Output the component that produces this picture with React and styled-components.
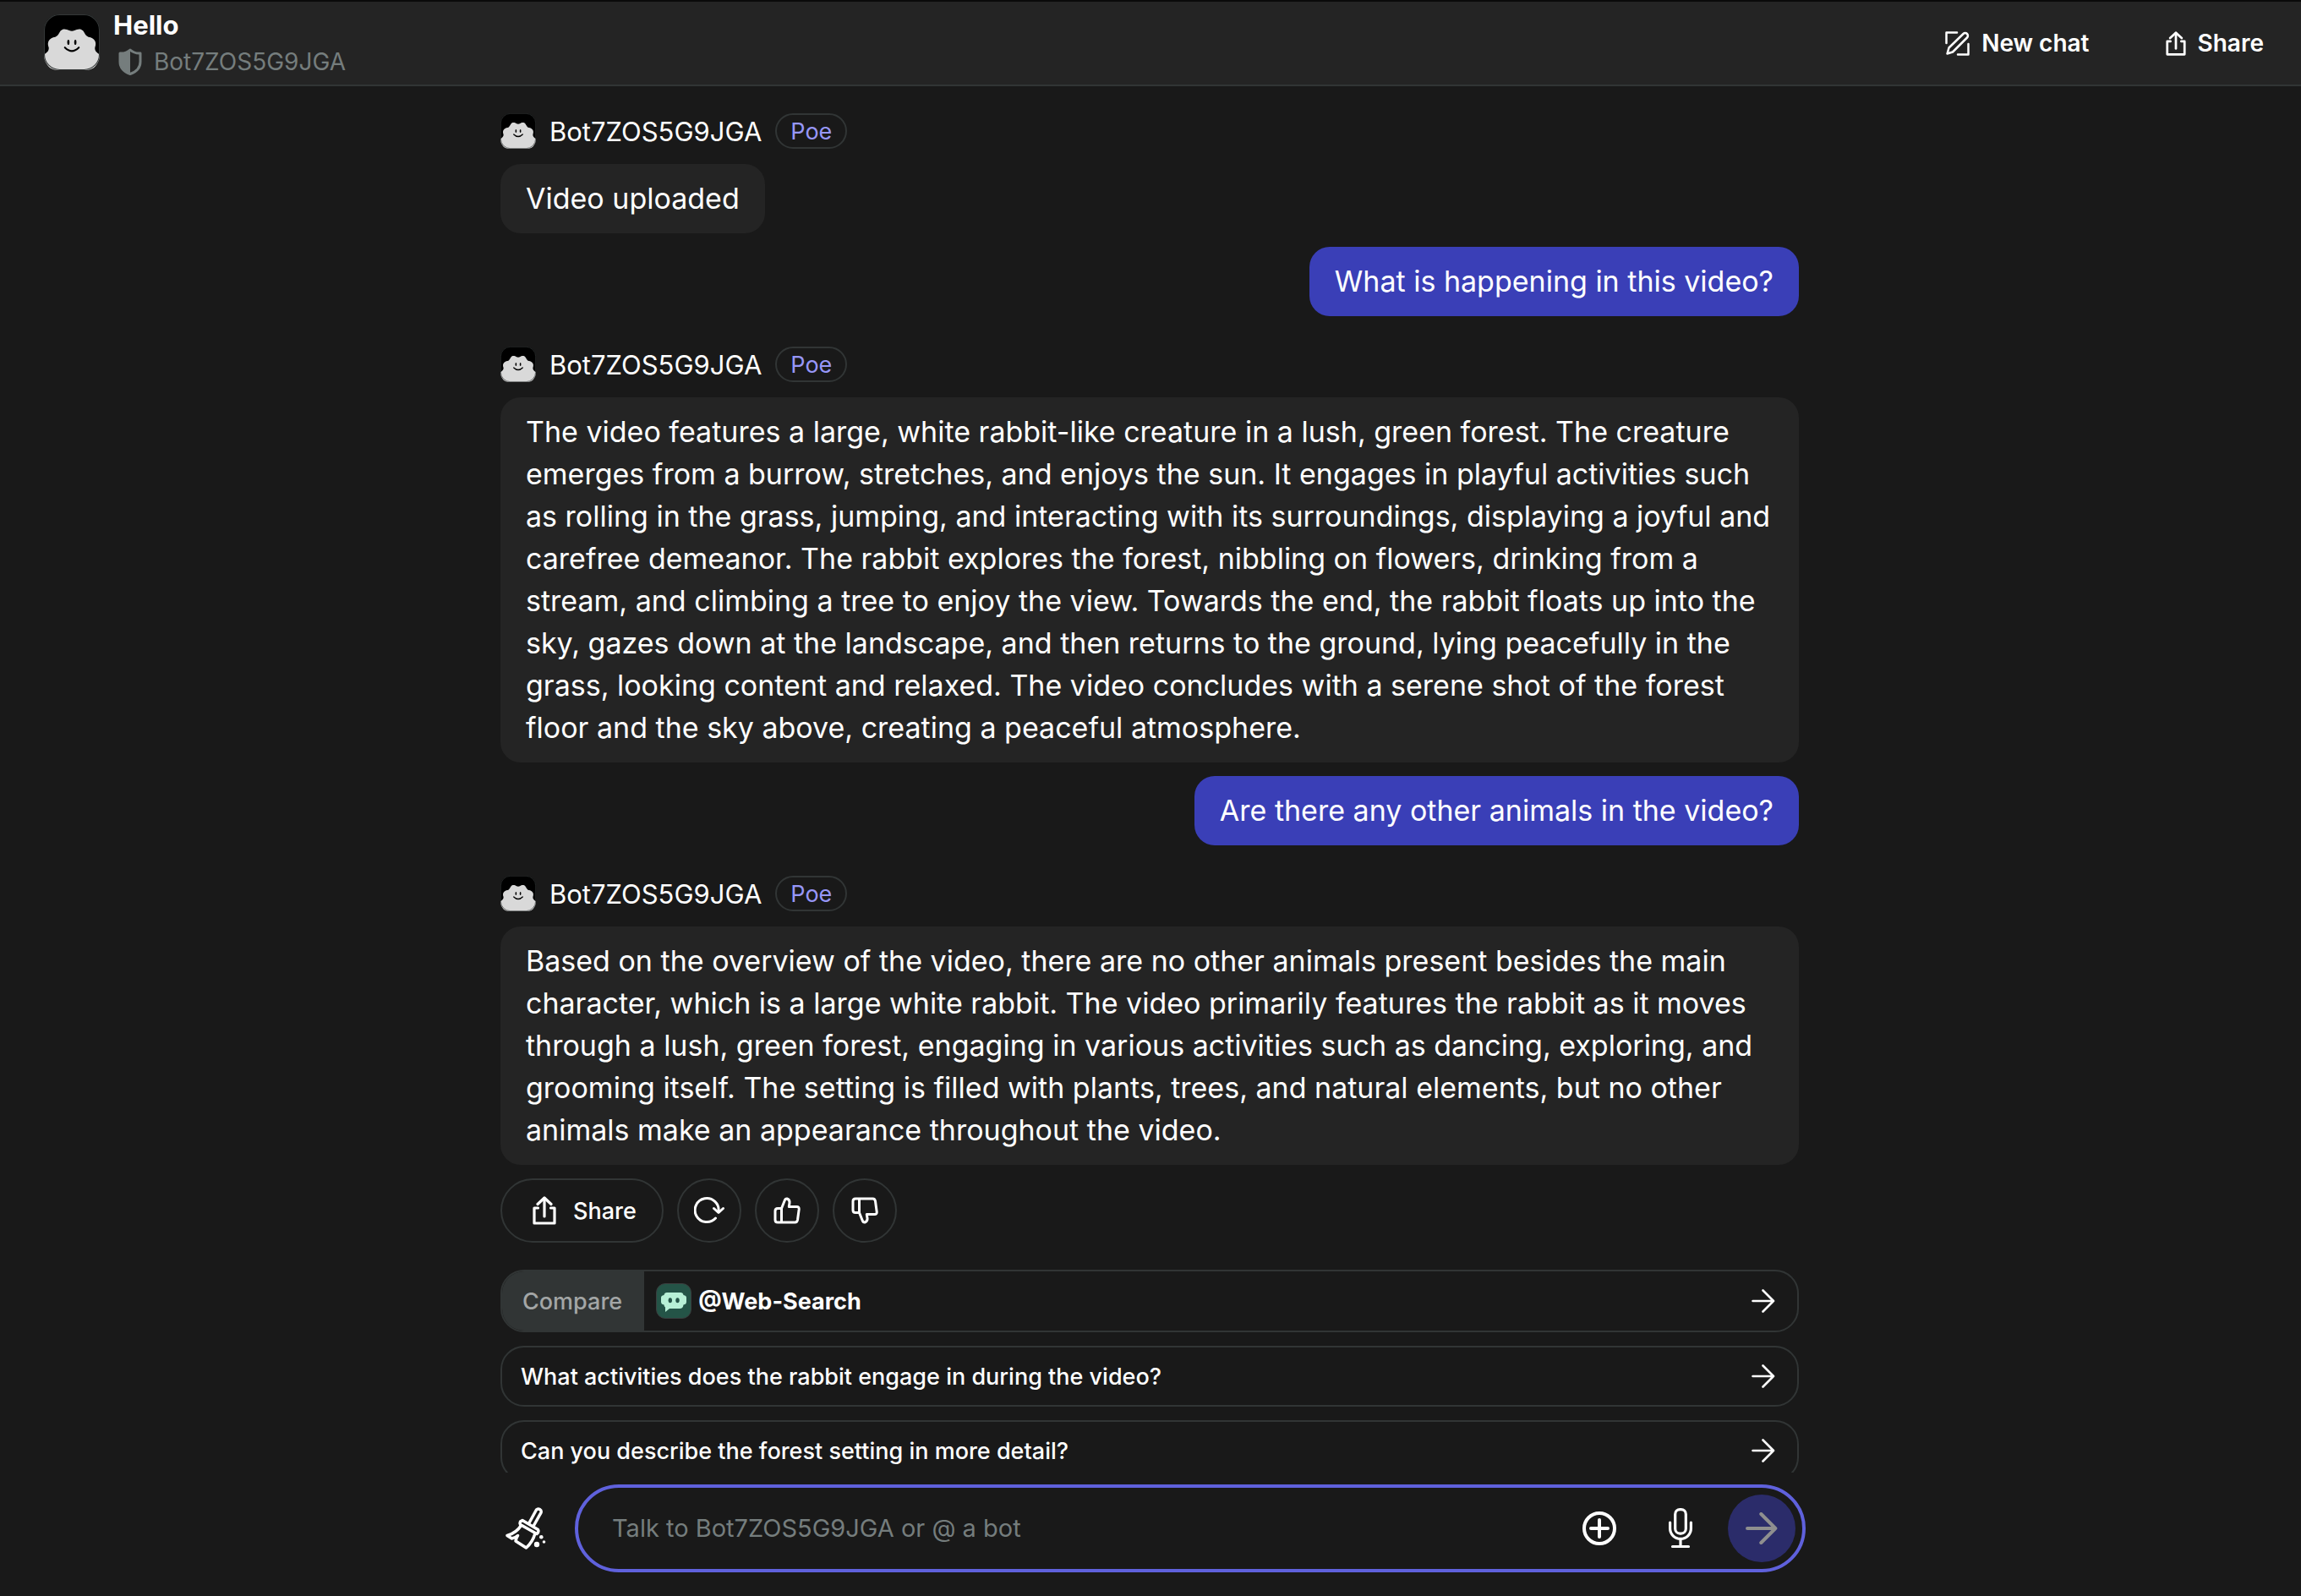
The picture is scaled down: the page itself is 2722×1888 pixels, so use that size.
import React from "react";
import styled, { createGlobalStyle } from "styled-components";

const GlobalStyle = createGlobalStyle`
  * { box-sizing: border-box; }
  body {
    margin: 0;
    background: #191919;
    color: #ffffff;
    font-family: Inter, "Liberation Sans", sans-serif;
    -webkit-font-smoothing: antialiased;
  }
  button, input { font: inherit; color: inherit; }
  p, h1, h2 { margin: 0; font: inherit; }
  svg { display: block; flex: none; }
`;

const line = "#313535";

const Page = styled.div`
  display: flex;
  flex-direction: column;
  height: 100vh;
`;

const TopBar = styled.header`
  display: flex;
  justify-content: space-between;
  align-items: center;
  padding: 0 44px 2px 52px;
  height: 102px;
  flex: none;
  background: #242424;
  border-top: 2px solid #0a0a0a;
  border-bottom: 2px solid ${line};
`;

const ChatInfo = styled.div`
  display: flex;
  align-items: center;
  gap: 16px;
`;

const ChatHeading = styled.div`
  padding-top: 8px;
`;

const ChatTitle = styled.h1`
  font-size: 31px;
  line-height: 38px;
  font-weight: 700;
`;

const ChatBot = styled.p`
  display: flex;
  align-items: center;
  gap: 14px;
  padding-left: 6px;
  font-size: 28px;
  line-height: 48px;
  color: #757d7d;
`;

const TopActions = styled.nav`
  display: flex;
  gap: 90px;
  padding-top: 2px;
`;

const TopButton = styled.button`
  display: flex;
  align-items: center;
  gap: 14px;
  padding: 0;
  border: 0;
  background: none;
  font-size: 28px;
  line-height: 40px;
  font-weight: 600;
`;

const Scroller = styled.main`
  flex: 1;
  min-height: 0;
  overflow: hidden;
  padding: 32px 2px 0 0;
`;

const Column = styled.div`
  display: flex;
  flex-direction: column;
  width: 100%;
  max-width: 1536px;
  margin: 0 auto;
`;

const BotMessage = styled.article`
  display: flex;
  flex-direction: column;
  align-items: flex-start;
  gap: 18px;
`;

const Sender = styled.div`
  display: flex;
  align-items: center;
  gap: 16px;
  height: 42px;
  font-size: 31px;
`;

const Tag = styled.span`
  display: flex;
  align-items: center;
  height: 42px;
  padding: 0 16px;
  border: 2px solid ${line};
  border-radius: 21px;
  font-size: 27px;
  color: #9797f8;
`;

const Bubble = styled.p`
  padding: 16px 30px;
  border-radius: 24px;
  font-size: 34px;
  line-height: 50px;
  background: ${(p) => (p.$own ? "#3a3fb7" : "#242424")};
  align-self: ${(p) => (p.$own ? "flex-end" : "auto")};
  margin: ${(p) => (p.$own ? "16px 0 36px" : "0")};
`;

const Actions = styled.div`
  display: flex;
  gap: 16px;
  margin-top: 16px;
`;

const ActionButton = styled.button`
  display: flex;
  align-items: center;
  justify-content: center;
  gap: 20px;
  min-width: 76px;
  height: 76px;
  padding: ${(p) => (p.$wide ? "0 30px 0 36px" : "0")};
  border: 2px solid ${line};
  border-radius: 38px;
  background: none;
  font-size: 27px;
  font-weight: 500;
`;

const Suggestions = styled.div`
  display: flex;
  flex-direction: column;
  gap: 16px;
  margin-top: 32px;
`;

const Suggestion = styled.button`
  display: flex;
  align-items: stretch;
  height: ${(p) => (p.$tall ? 74 : 72)}px;
  flex: none;
  padding: 0 26px 0 0;
  border: 2px solid ${line};
  border-radius: 28px;
  background: none;
  overflow: hidden;
  font-size: 27px;
  font-weight: 500;
  text-align: left;
`;

const SuggestionText = styled.span`
  display: flex;
  align-items: center;
  flex: 1;
  padding-left: 22px;
`;

const CompareLabel = styled.span`
  display: flex;
  align-items: center;
  padding: 0 26px 0 24px;
  background: ${line};
  color: #a3a6a6;
`;

const CompareBot = styled.span`
  display: flex;
  align-items: center;
  gap: 8px;
  flex: 1;
  padding-left: 14px;
  font-weight: 700;
`;

const ArrowSlot = styled.span`
  display: flex;
  align-items: center;
`;

const Footer = styled.footer`
  flex: none;
  padding: 14px 2px 28px 0;
`;

const Composer = styled.form`
  display: flex;
  align-items: center;
  gap: 34px;
  width: 100%;
  max-width: 1552px;
  margin: 0 auto;
  padding-left: 14px;
`;

const IconButton = styled.button`
  display: flex;
  align-items: center;
  justify-content: center;
  flex: none;
  width: ${(p) => p.$size}px;
  height: ${(p) => p.$size}px;
  padding: 0;
  border: 0;
  border-radius: 50%;
  background: ${(p) => (p.$filled ? "#2b2c6a" : "none")};
  color: ${(p) => (p.$filled ? "#8f8f8f" : "#ffffff")};
`;

const InputShell = styled.div`
  display: flex;
  align-items: center;
  gap: 16px;
  flex: 1;
  height: 104px;
  padding: 0 8px 0 40px;
  border: 4px solid #5f61dc;
  border-radius: 52px;
`;

const TextField = styled.input`
  flex: 1;
  min-width: 0;
  padding: 0;
  border: 0;
  outline: 0;
  background: none;
  font-size: 29px;
  line-height: 40px;
  &::placeholder { color: #757d7d; opacity: 1; }
`;

const stroke = {
  fill: "none",
  stroke: "currentColor",
  strokeLinecap: "round",
  strokeLinejoin: "round",
};

const Avatar = ({ size }) => (
  <svg width={size} height={size} viewBox="0 0 64 64" aria-hidden="true">
    <rect width="64" height="64" rx="18" fill="#000" />
    <path
      d="M0 46 C3 44 6 42 5.500 38 C3 32 6 27 13 26 C16 25 17 22 19 19 C22 15.500 26 17 29 18.500 Q32 20 35 18.500 C38 17 42 15.500 45 19 C47 22 48 25 51 26 C58 27 61 32 58.500 38 C58 42 61 44 64 46 C64 52 62 55 60.500 57.500 C58 62 53 64 48 64 H16 C11 64 6 62 3.500 57.500 C2 55 0 52 0 46 Z"
      fill="#d9d9d9"
    />
    <rect x="0.500" y="0.500" width="63" height="63" rx="17.500" fill="none" stroke="#343838" />
    <ellipse cx="28" cy="32" rx="1.300" ry="3" fill="#000" />
    <ellipse cx="36" cy="32" rx="1.300" ry="3" fill="#000" />
    <path d="M24 38 Q32 46 40 38" fill="none" stroke="#000" strokeWidth="2" strokeLinecap="round" />
  </svg>
);

const ShieldIcon = () => (
  <svg width="28" height="32" viewBox="0 0 28 32" aria-hidden="true">
    <path
      d="M14 2 Q19 6.500 26 6 V16 C26 23 21 28 14 30.500 C7 28 2 23 2 16 V6 Q9 6.500 14 2 Z"
      {...stroke}
      strokeWidth="3"
    />
    <path d="M14 2 V30.500 C7 28 2 23 2 16 V6 Q9 6.500 14 2 Z" fill="currentColor" />
  </svg>
);

const ComposeIcon = () => (
  <svg width="29" height="29" viewBox="0 0 29 29" aria-hidden="true">
    <g {...stroke} strokeWidth="2.500">
      <path d="M14 1.500 H1.500 V14" />
      <path d="M27.500 15 V27.500 H15" />
      <path d="M2.500 26.500 L4.500 19.500 L21.500 3 A3 3 0 0 1 26 7.500 L9 24.500 Z" />
    </g>
  </svg>
);

const ShareIcon = ({ width, height }) => (
  <svg width={width} height={height} viewBox="0 0 28 34" aria-hidden="true">
    <g {...stroke} strokeWidth="3.200">
      <path d="M14 2.500 V24" />
      <path d="M6 9.500 L14 2 L22 9.500" />
      <path d="M6.500 14 H2 V32 H26 V14 H21.500" />
    </g>
  </svg>
);

const RetryIcon = () => (
  <svg width="36" height="32" viewBox="0 0 36 32" aria-hidden="true">
    <g {...stroke} strokeWidth="3">
      <path d="M25.500 25 A14 14 0 1 1 29 17.500" />
      <path d="M23.500 13.500 L29 18.500 L34.500 13.500" />
    </g>
  </svg>
);

const ThumbIcon = ({ down }) => (
  <svg width="32" height="32" viewBox="0 0 32 32" aria-hidden="true">
    <path
      transform={down ? "matrix(1 0 0 -1 0 32)" : undefined}
      d="M9.500 13.500 L13.500 3.500 Q14.300 1.800 16 2 C18.500 3 19.300 5 19 7 L18.300 11.500 H27.500 Q30.500 11.500 30.200 14.500 L28.500 27 Q28 30 25.500 30 H5 Q2 30 2 27 V16.500 Q2 13.500 5 13.500 H9.500 V30"
      {...stroke}
      strokeWidth="3"
    />
  </svg>
);

const ArrowIcon = ({ size, weight }) => (
  <svg width={size} height={size} viewBox="0 0 28 28" aria-hidden="true">
    <path d="M1.500 14 H26 M13.500 1.500 L26 14 L13.500 26.500" {...stroke} strokeWidth={weight} />
  </svg>
);

const WebSearchIcon = () => (
  <svg width="42" height="42" viewBox="0 0 42 42" aria-hidden="true">
    <rect x="0.500" y="0.500" width="41" height="41" rx="10.500" fill="#245447" stroke="#3a3f3f" />
    <path
      d="M13 11 H29 Q32 11 32.500 14 Q36 14.500 36 17 V22 Q36 25 32.500 25.500 Q32 30 28 30 H16 L11 34 V28.500 Q9.500 27.500 9.500 25.500 Q6 25 6 22 V17 Q6 14.500 9.500 14 Q10 11 13 11 Z"
      fill="#b7f0d6"
    />
    <ellipse cx="16.800" cy="20.300" rx="2.200" ry="3" fill="#245447" />
    <ellipse cx="25.500" cy="20.300" rx="2.200" ry="3" fill="#245447" />
  </svg>
);

const BroomIcon = () => (
  <svg width="48" height="52" viewBox="0 0 48 52" aria-hidden="true">
    <g {...stroke} strokeWidth="3.500">
      <path d="M28 19.500 L36.500 4 A3.300 3.300 0 0 1 42 7.300 L33.500 22.500" />
      <path d="M20 16.500 L38.500 27.500 Q39.500 29 38.500 31 L37 32.500 L17.500 21.500 Q16.500 20 17.500 18 Z" />
      <path d="M18.500 22.500 C15 28 9 32.500 2 34.500 L7.500 38 Q11 37.500 14.500 34.500 Q12.500 37.500 12 41 L24.500 49 C29 45 33 39 35 32" />
    </g>
    <circle cx="37" cy="45" r="3.200" fill="currentColor" />
    <circle cx="42.300" cy="36.200" r="2.300" fill="currentColor" />
    <circle cx="45.500" cy="42" r="1.800" fill="currentColor" />
  </svg>
);

const PlusIcon = () => (
  <svg width="40" height="40" viewBox="0 0 40 40" aria-hidden="true">
    <g {...stroke} strokeWidth="4">
      <circle cx="20" cy="20" r="18" />
      <path d="M20 10 V30 M10 20 H30" />
    </g>
  </svg>
);

const MicIcon = () => (
  <svg width="28" height="48" viewBox="0 0 28 48" aria-hidden="true">
    <g {...stroke} strokeWidth="3.200">
      <rect x="7.700" y="1.600" width="12.600" height="28.500" rx="5.600" />
      <path d="M1.600 17 V24 A12.400 12.400 0 0 0 26.400 24 V17" />
      <path d="M14 37 V45.500 M4.500 45.500 H23.500" />
    </g>
  </svg>
);

const BotReply = ({ children }) => (
  <BotMessage>
    <Sender>
      <Avatar size={42} />
      <h2>Bot7ZOS5G9JGA</h2>
      <Tag>Poe</Tag>
    </Sender>
    <Bubble>{children}</Bubble>
  </BotMessage>
);

const questions = [
  "What activities does the rabbit engage in during the video?",
  "Can you describe the forest setting in more detail?",
];

export default function App() {
  return (
    <Page>
      <GlobalStyle />
      <TopBar>
        <ChatInfo>
          <Avatar size={66} />
          <ChatHeading>
            <ChatTitle>Hello</ChatTitle>
            <ChatBot>
              <ShieldIcon />
              Bot7ZOS5G9JGA
            </ChatBot>
          </ChatHeading>
        </ChatInfo>
        <TopActions>
          <TopButton type="button">
            <ComposeIcon />
            New chat
          </TopButton>
          <TopButton type="button">
            <ShareIcon width={24} height={29} />
            Share
          </TopButton>
        </TopActions>
      </TopBar>

      <Scroller>
        <Column>
          <BotReply>Video uploaded</BotReply>
          <Bubble $own>What is happening in this video?</Bubble>
          <BotReply>
            The video features a large, white rabbit-like creature in a lush, green forest. The creature
            emerges from a burrow, stretches, and enjoys the sun. It engages in playful activities such as
            rolling in the grass, jumping, and interacting with its surroundings, displaying a joyful and
            carefree demeanor. The rabbit explores the forest, nibbling on flowers, drinking from a stream,
            and climbing a tree to enjoy the view. Towards the end, the rabbit floats up into the sky, gazes
            down at the landscape, and then returns to the ground, lying peacefully in the grass, looking
            content and relaxed. The video concludes with a serene shot of the forest floor and the sky
            above, creating a peaceful atmosphere.
          </BotReply>
          <Bubble $own>Are there any other animals in the video?</Bubble>
          <BotReply>
            Based on the overview of the video, there are no other animals present besides the main
            character, which is a large white rabbit. The video primarily features the rabbit as it moves
            through a lush, green forest, engaging in various activities such as dancing, exploring, and
            grooming itself. The setting is filled with plants, trees, and natural elements, but no other
            animals make an appearance throughout the video.
          </BotReply>

          <Actions>
            <ActionButton type="button" $wide>
              <ShareIcon width={28} height={34} />
              Share
            </ActionButton>
            <ActionButton type="button" aria-label="Retry">
              <RetryIcon />
            </ActionButton>
            <ActionButton type="button" aria-label="Like">
              <ThumbIcon />
            </ActionButton>
            <ActionButton type="button" aria-label="Dislike">
              <ThumbIcon down />
            </ActionButton>
          </Actions>

          <Suggestions>
            <Suggestion type="button" $tall>
              <CompareLabel>Compare</CompareLabel>
              <CompareBot>
                <WebSearchIcon />
                @Web-Search
              </CompareBot>
              <ArrowSlot>
                <ArrowIcon size={28} weight={2.6} />
              </ArrowSlot>
            </Suggestion>
            {questions.map((q) => (
              <Suggestion type="button" key={q}>
                <SuggestionText>{q}</SuggestionText>
                <ArrowSlot>
                  <ArrowIcon size={28} weight={2.6} />
                </ArrowSlot>
              </Suggestion>
            ))}
          </Suggestions>
        </Column>
      </Scroller>

      <Footer>
        <Composer onSubmit={(e) => e.preventDefault()}>
          <IconButton type="button" $size={48} aria-label="Clear context">
            <BroomIcon />
          </IconButton>
          <InputShell>
            <TextField type="text" aria-label="Message" placeholder="Talk to Bot7ZOS5G9JGA or @ a bot" />
            <IconButton type="button" $size={80} aria-label="Attach">
              <PlusIcon />
            </IconButton>
            <IconButton type="button" $size={80} aria-label="Voice message">
              <MicIcon />
            </IconButton>
            <IconButton type="submit" $size={80} $filled aria-label="Send">
              <ArrowIcon size={38} weight={3} />
            </IconButton>
          </InputShell>
        </Composer>
      </Footer>
    </Page>
  );
}
